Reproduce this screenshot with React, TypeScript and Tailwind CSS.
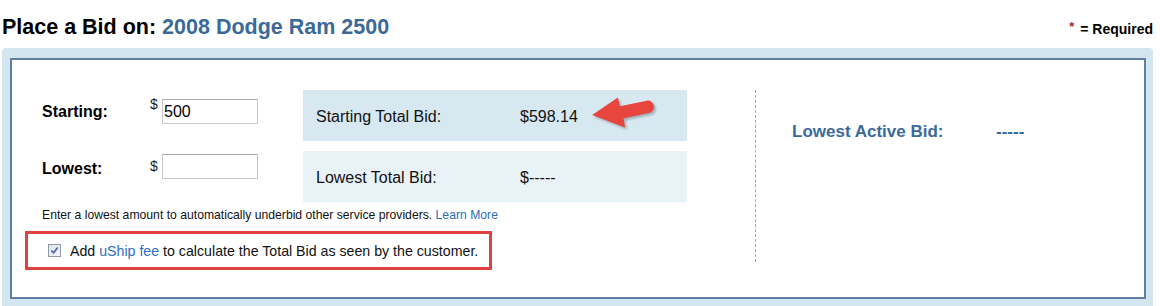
import React from "react";

const font = { fontFamily: '"Liberation Sans", Arial, sans-serif' };

function FakeCheckbox() {
  return (
    <span className="flex h-[13px] w-[13px] shrink-0 items-center justify-center border border-[#8f9aa8] bg-gradient-to-br from-[#dfe3ea] to-[#f4f5f8]">
      <svg viewBox="0 0 10 10" className="h-[9px] w-[9px]">
        <path d="M1.5 5.2 L4 7.6 L8.6 1.8" fill="none" stroke="#4a5fa8" strokeWidth="1.8" />
      </svg>
    </span>
  );
}

function RedArrow() {
  return (
    <svg
      viewBox="0 0 70 38"
      className="pointer-events-none absolute left-[284px] top-[3px] h-[40px] w-[72px] drop-shadow-[2px_2px_1px_rgba(0,0,0,0.25)]"
    >
      <path
        d="M5 21 L30 4 L32 12.5 L58 7 A6 6 0 0 1 60 19 L35.5 24 L37 33 Z"
        fill="#e8453e"
      />
    </svg>
  );
}

export default function App() {
  return (
    <div className="h-[306px] w-[1160px] overflow-hidden bg-white text-black" style={font}>
      {/* header */}
      <div className="flex h-[48px] items-start justify-between pl-[2px] pr-[7px]">
        <h1 className="pt-[14px] text-[21.5px] font-bold leading-[26px]">
          Place a Bid on: <span className="text-[#3b6a98]">2008 Dodge Ram 2500</span>
        </h1>
        <div className="pt-[21px] text-[14px] font-bold leading-[16px]">
          <span className="relative -top-[3px] mr-[6px] text-[13px] text-[#a8242a]">*</span>= Required
        </div>
      </div>

      {/* frame */}
      <div className="ml-[2px] w-[1151px] rounded-t-[4px] bg-[#d3e6f0] pb-[7px] pl-[8px] pr-[7px] pt-[10px]">
        <div className="flex h-[241px] border-2 border-[#5f7fa2] bg-white">
          {/* left section */}
          <div className="w-[743px] pt-[30px]">
            <div className="flex">
              {/* form column */}
              <div className="w-[291px] pl-[30px]">
                <div className="mt-[9px] flex h-[25px] items-center">
                  <div className="w-[108px] text-[16px] font-bold leading-[18px]">Starting:</div>
                  <div className="w-[12px] self-start -mt-[2px] text-[14px] leading-[15px] text-[#1a1a1a]">$</div>
                  <input
                    readOnly
                    value="500"
                    className="h-[25px] w-[96px] border border-[#c9c9c9] border-t-[#a9a9a9] px-[1px] text-[16px] text-black outline-none"
                    style={font}
                  />
                </div>
                <div className="mt-[30px] flex h-[25px] items-center">
                  <div className="w-[108px] pt-[4px] text-[16px] font-bold leading-[18px]">Lowest:</div>
                  <div className="w-[12px] self-start mt-[5px] text-[14px] leading-[15px] text-[#1a1a1a]">$</div>
                  <input
                    readOnly
                    value=""
                    className="h-[25px] w-[96px] border border-[#c9c9c9] border-t-[#a9a9a9] px-[1px] text-[16px] outline-none"
                    style={font}
                  />
                </div>
              </div>

              {/* totals column */}
              <div className="relative flex w-[384px] flex-col gap-[10px] text-[16px] leading-[18px] text-[#111]">
                <div className="flex h-[51px] items-center bg-[#d7e8f1] pl-[13px] pt-[3px]">
                  <span className="w-[204px]">Starting Total Bid:</span>
                  <span>$598.14</span>
                </div>
                <div className="flex h-[51px] items-center bg-[#e9f3f7] pl-[13px] pt-[3px]">
                  <span className="w-[204px]">Lowest Total Bid:</span>
                  <span>$-----</span>
                </div>
                <RedArrow />
              </div>
            </div>

            <p className="mt-[6px] pl-[30px] text-[12.2px] leading-[14px] text-[#111]">
              Enter a lowest amount to automatically underbid other service providers.{" "}
              <a className="text-[#2c6fb8]">Learn More</a>
            </p>

            <div className="ml-[13px] mt-[9px] flex h-[39px] w-[467px] items-center gap-[9px] border-[3px] border-[#e0403f] pl-[20px] text-[14.2px] leading-[16px] text-[#111]">
              <FakeCheckbox />
              <span>
                Add <a className="text-[#2c6fb8]">uShip fee</a> to calculate the Total Bid as seen by the customer.
              </span>
            </div>
          </div>

          {/* separator */}
          <div className="mt-[30px] h-[172px] border-l border-dashed border-[#a6a6a6]" />

          {/* right section */}
          <div className="flex flex-1 items-start pl-[36px] pt-[62px] text-[17px] font-bold leading-[20px] text-[#3b6a98]">
            <span className="w-[204px]">Lowest Active Bid:</span>
            <span>-----</span>
          </div>
        </div>
      </div>
    </div>
  );
}
